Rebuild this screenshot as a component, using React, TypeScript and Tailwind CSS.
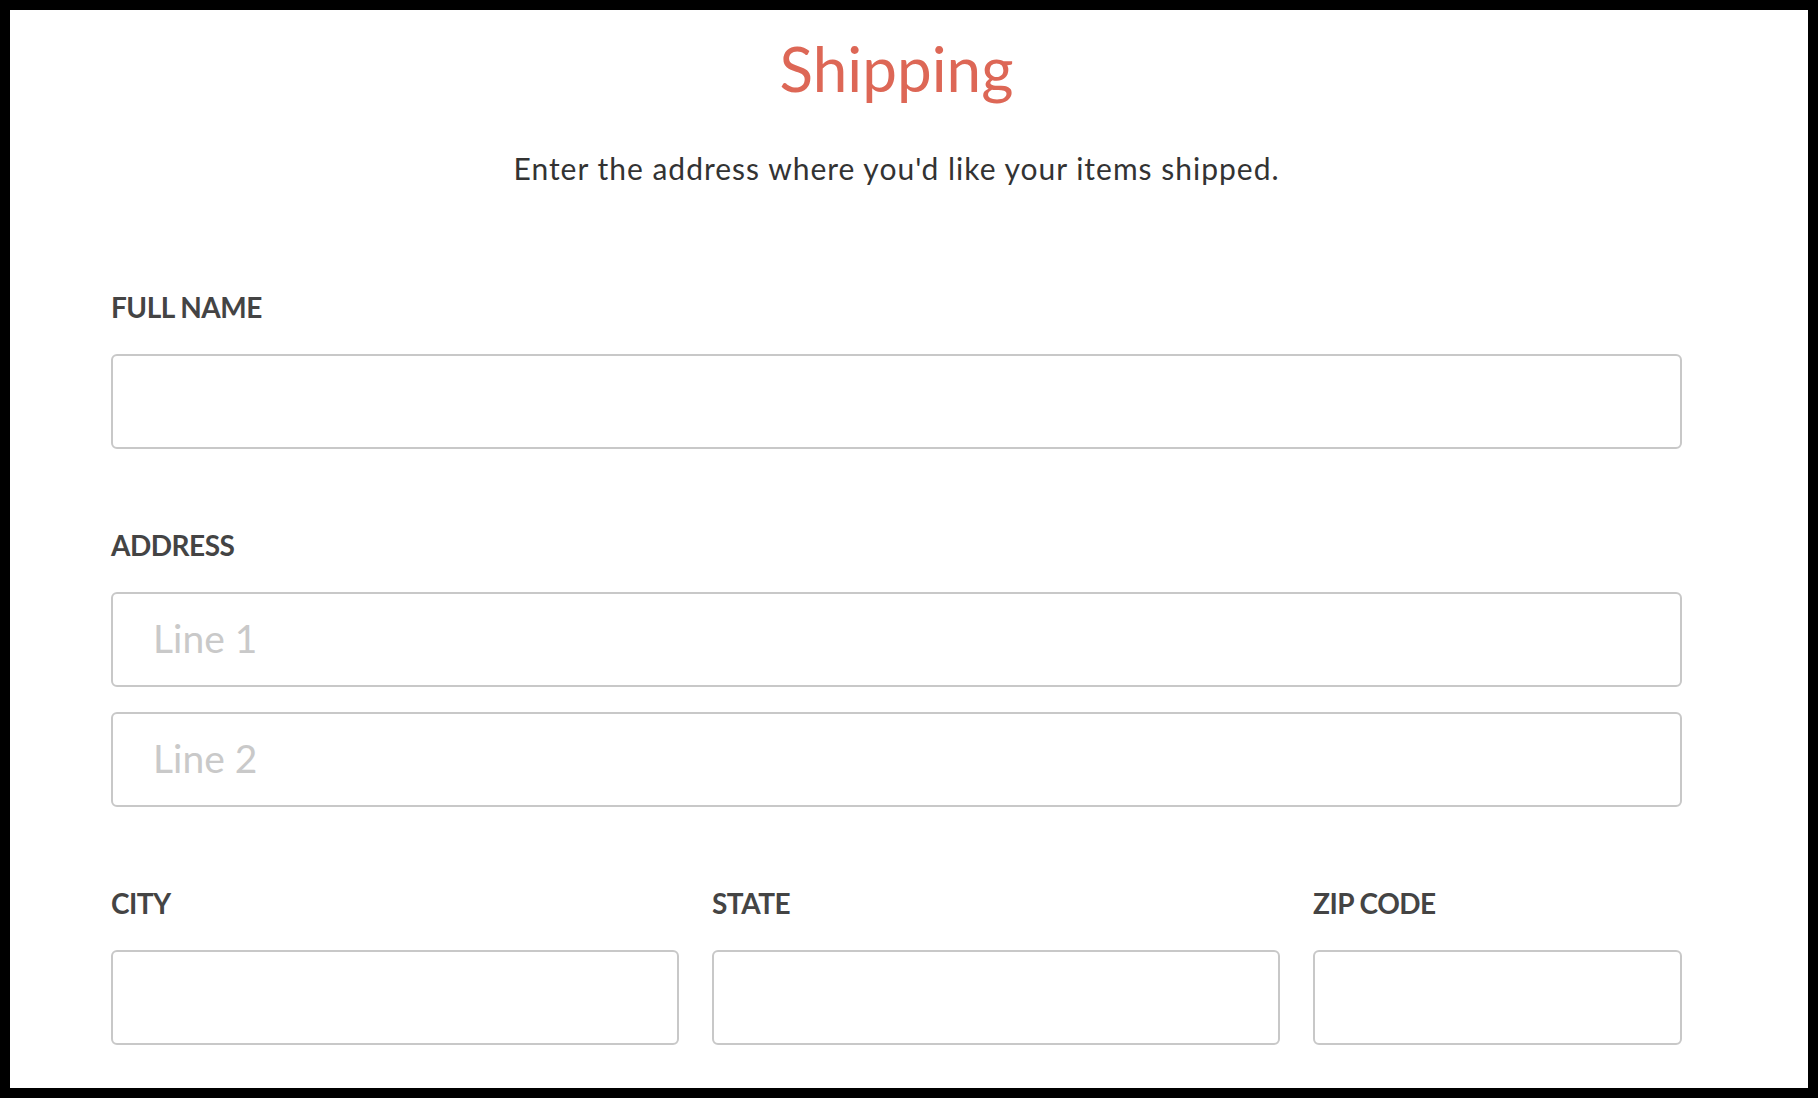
import React from 'react';

const font = { fontFamily: 'Lato, "Open Sans", sans-serif' };

const inputClass =
  'block w-full h-[95px] rounded-[6px] border-2 border-[#c8c8c8] bg-white pl-[40px] pr-4 pb-[4px] text-[39px] text-[#333] placeholder:text-[#c9c9c9] outline-none';

const Field = ({ label, children }: { label: string; children: React.ReactNode }) => (
  <div>
    <label className="block text-[28px] leading-none font-bold tracking-[-0.5px] text-[#444] mb-[33px]">
      {label}
    </label>
    {children}
  </div>
);

export default function App() {
  return (
    <div className="h-[1098px] w-full bg-black p-[10px]" style={font}>
      <div className="h-full bg-white pl-[101px] pt-[27px]">
        <div className="w-[1571px]">
          {/* Header */}
          <h1 className="text-center text-[62px] leading-none font-normal text-[#dd6756]">Shipping</h1>
          <p className="mt-[54px] text-center text-[30px] leading-none tracking-[1px] text-[#333]">
            Enter the address where you'd like your items shipped.
          </p>

          {/* Form */}
          <form className="mt-[110px] flex flex-col gap-[82px]">
            <Field label="FULL NAME">
              <input className={inputClass} type="text" />
            </Field>

            <Field label="ADDRESS">
              <div className="flex flex-col gap-[25px]">
                <input className={inputClass} type="text" placeholder="Line 1" />
                <input className={inputClass} type="text" placeholder="Line 2" />
              </div>
            </Field>

            <div className="grid grid-cols-[568px_568px_1fr] gap-x-[33px]">
              <Field label="CITY">
                <input className={inputClass} type="text" />
              </Field>
              <Field label="STATE">
                <input className={inputClass} type="text" />
              </Field>
              <Field label="ZIP CODE">
                <input className={inputClass} type="text" />
              </Field>
            </div>
          </form>
        </div>
      </div>
    </div>
  );
}
